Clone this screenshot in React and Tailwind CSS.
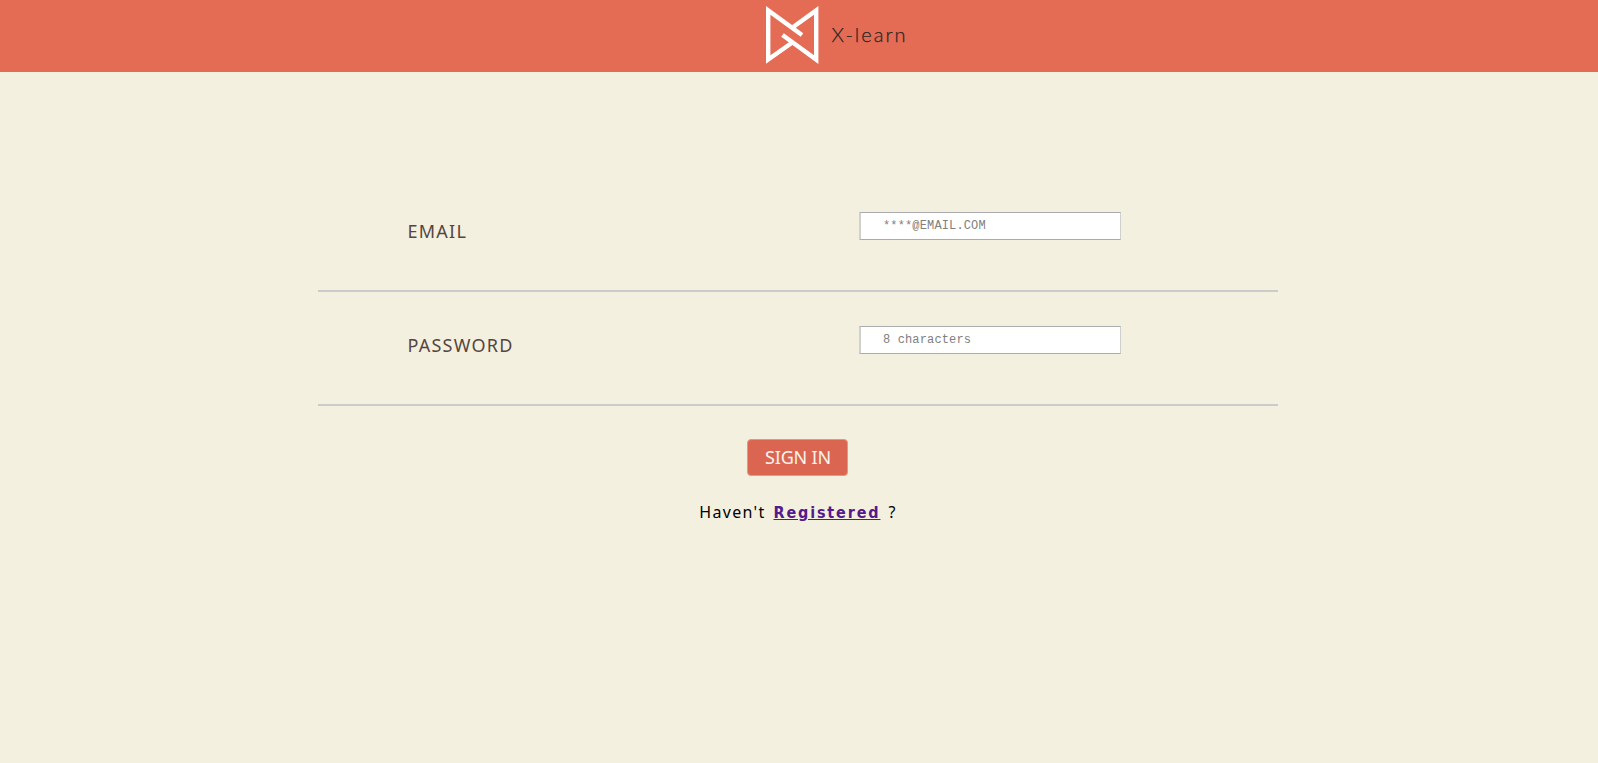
function Field({ label, ...input }) {
  return (
    <div className="flex h-[114px] justify-between border-b-2 border-[#cbcbcb] pl-[89.5px] pr-[157px] pt-[34px]">
      <label className="pt-[5px] text-[18px] leading-7 tracking-[1.25px] text-[#554640]">{label}</label>
      <input
        {...input}
        className="h-7 w-[262px] border border-y-[#a9abb0] border-l-2 border-x-[#d0d0d0] bg-white pl-[22px] font-['Liberation_Mono',monospace] text-[12px] tracking-[0.14px] placeholder:text-[#808080] outline-none"
      />
    </div>
  );
}

function Logo() {
  return (
    <svg width="53" height="58" viewBox="0 0 53 58" fill="none" stroke="#fff" strokeWidth="4.4" strokeMiterlimit="10">
      <path d="M36 29 2.2 4.4V53.6L27 36" />
      <path d="M16.5 29 50.2 53.6V4.4L26.5 21.5" />
    </svg>
  );
}

export default function App() {
  return (
    <div className="min-h-screen bg-[#f4f0e0] font-['Noto_Sans',sans-serif]">
      <header className="flex h-[72px] bg-[#e46c55] pl-[766px] pt-1.5">
        <Logo />
        <span className="ml-[12.5px] pt-[14px] font-['Lato',sans-serif] text-[20px] font-light leading-7 tracking-[2px] text-[#2b2625] [-webkit-text-stroke:0.25px_#2b2625]">X-learn</span>
      </header>
      <form className="ml-[318px] flex w-[960px] flex-col pt-[106px]">
        <Field label="EMAIL" type="email" placeholder="****@EMAIL.COM" />
        <Field label="PASSWORD" type="password" placeholder="8 characters" />
        <button type="button" className="ml-[429px] mt-[33px] h-[37px] w-[101px] rounded-[4px] border border-[#e69684] bg-[#da6652] pl-px text-[18px] tracking-[-0.2px] text-[#fcf3eb]">
          SIGN IN
        </button>
        <p className="mt-6 self-center text-[16px] leading-6 tracking-[1.3px] text-black [word-spacing:2.5px]">
          Haven't <a className="font-['DejaVu_Sans_Condensed','DejaVu_Sans',sans-serif] text-[16px] font-bold tracking-[1.85px] text-[#551a8b] underline">Registered</a> ?
        </p>
      </form>
    </div>
  );
}
